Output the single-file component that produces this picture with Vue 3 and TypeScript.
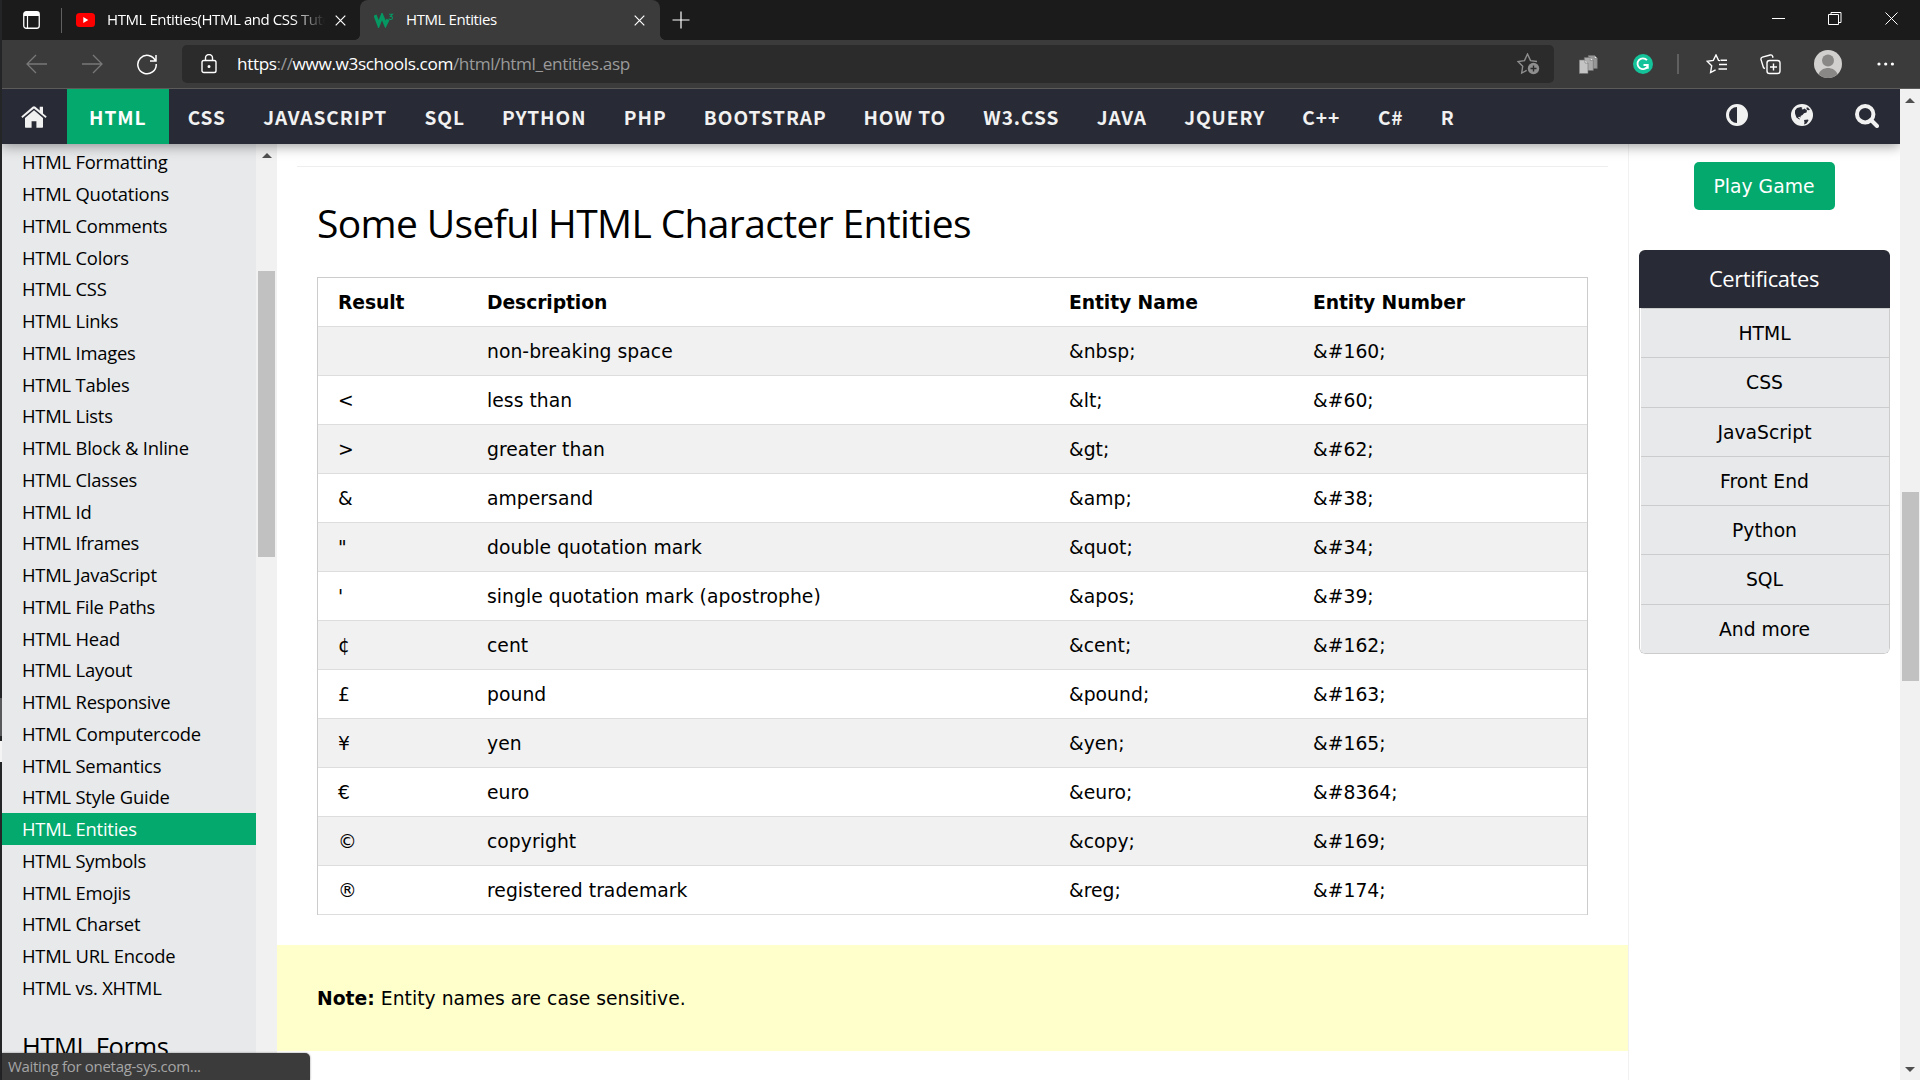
<script setup lang="ts">
interface NavItem { label: string; width: number }
interface Entity { result: string; description: string; name: string; number: string }

const navItems: NavItem[] = [
  { label: 'HTML', width: 102 },
  { label: 'CSS', width: 76 },
  { label: 'JAVASCRIPT', width: 161 },
  { label: 'SQL', width: 78 },
  { label: 'PYTHON', width: 121 },
  { label: 'PHP', width: 81 },
  { label: 'BOOTSTRAP', width: 159 },
  { label: 'HOW TO', width: 120 },
  { label: 'W3.CSS', width: 113 },
  { label: 'JAVA', width: 88 },
  { label: 'JQUERY', width: 118 },
  { label: 'C++', width: 75 },
  { label: 'C#', width: 64 },
  { label: 'R', width: 50 },
]

const lessons: string[] = [
  'Formatting', 'Quotations', 'Comments', 'Colors', 'CSS', 'Links', 'Images', 'Tables', 'Lists',
  'Block & Inline', 'Classes', 'Id', 'Iframes', 'JavaScript', 'File Paths', 'Head', 'Layout',
  'Responsive', 'Computercode', 'Semantics', 'Style Guide', 'Entities', 'Symbols', 'Emojis',
  'Charset', 'URL Encode', 'vs. XHTML',
]
const activeLesson = 'Entities'

const entities: Entity[] = [
  { result: '\u00a0', description: 'non-breaking space', name: '&nbsp;', number: '&#160;' },
  { result: '<', description: 'less than', name: '&lt;', number: '&#60;' },
  { result: '>', description: 'greater than', name: '&gt;', number: '&#62;' },
  { result: '&', description: 'ampersand', name: '&amp;', number: '&#38;' },
  { result: '"', description: 'double quotation mark', name: '&quot;', number: '&#34;' },
  { result: "'", description: 'single quotation mark (apostrophe)', name: '&apos;', number: '&#39;' },
  { result: '¢', description: 'cent', name: '&cent;', number: '&#162;' },
  { result: '£', description: 'pound', name: '&pound;', number: '&#163;' },
  { result: '¥', description: 'yen', name: '&yen;', number: '&#165;' },
  { result: '€', description: 'euro', name: '&euro;', number: '&#8364;' },
  { result: '©', description: 'copyright', name: '&copy;', number: '&#169;' },
  { result: '®', description: 'registered trademark', name: '&reg;', number: '&#174;' },
]

const certificates: string[] = ['HTML', 'CSS', 'JavaScript', 'Front End', 'Python', 'SQL', 'And more']
</script>

<template>
  <div class="screen">
    <div class="edge"><i class="e1"></i><i class="e2"></i><i class="e3"></i><i class="e4"></i></div>
    <div class="window">
      <header class="tabbar">
        <svg class="tab-actions" width="17" height="18" viewBox="0 0 17 18" fill="none" stroke="#fff">
          <rect x=".75" y=".75" width="15.5" height="16.5" rx="2.5" stroke-width="1.3" />
          <path d="M1 3h15" stroke-width="4" /><path d="M4.500 5v12" stroke-width="1.2" />
        </svg>
        <i class="tab-divider"></i>
        <div class="tab tab-idle">
          <svg width="19" height="14" viewBox="0 0 19 14"><rect width="19" height="14" rx="3.5" fill="#f00" /><path d="M7.3 4v6l5-3z" fill="#fff" /></svg>
          <span class="tab-title fade">HTML Entities(HTML and CSS Tutorial)</span>
          <svg class="close" width="11" height="11" viewBox="0 0 11 11"><path d="M.7.7l9.600 9.600M10.300.7L.7 10.300" stroke="#fff" stroke-width="1.2" /></svg>
        </div>
        <div class="tab tab-active">
          <svg width="20" height="15" viewBox="0 0 20 15" fill="none" stroke="#059862">
            <path d="M1 2l3.600 9.500L8 3l3.500 8.500L14 6.500" stroke-width="3.300" />
            <path d="M15 1.200h3.500l-2 2.200c3 0 2.500 3.200-.2 3.100-.8 0-1.300-.4-1.600-.9" stroke-width="1.100" />
          </svg>
          <span class="tab-title">HTML Entities</span>
          <svg class="close" width="11" height="11" viewBox="0 0 11 11"><path d="M.7.7l9.600 9.600M10.300.7L.7 10.300" stroke="#fff" stroke-width="1.2" /></svg>
        </div>
        <svg class="plus" width="18" height="18" viewBox="0 0 18 18"><path d="M9 .5v17M.5 9h17" stroke="#fff" stroke-width="1.2" /></svg>
        <svg class="win-controls" width="127" height="14" viewBox="0 0 127 14" fill="none" stroke="#fff">
          <path d="M0 6.500h13" /><path d="M56.500 2.500h10v10h-10zM59 2.500v-2h10v10h-2M113.500.5l12 12M125.500.5l-12 12" />
        </svg>
      </header>

      <div class="toolbar">
        <svg class="nav-buttons" width="132" height="22" viewBox="0 0 132 22" fill="none" stroke-width="1.300">
          <path d="M22 11H2M11 2l-9 9 9 9M57 11h20M68 2l9 9-9 9" stroke="#787878" />
          <path d="M130.500 8A9.200 9.200 0 1 0 131.200 11M131 2v6h-6" stroke="#fff" stroke-width="1.500" />
        </svg>
        <div class="address">
          <svg width="16" height="20" viewBox="0 0 16 20" fill="none" stroke="#fff" stroke-width="1.400"><rect x="1" y="6.500" width="14" height="12" rx="1.800" /><path d="M4.500 6.500V4a3.500 3.500 0 0 1 7 0v2.500" /><circle cx="8" cy="12.500" r=".8" fill="#fff" /></svg>
          <span class="url"><b>https</b>://<b>www.w3schools.com</b>/html/html_entities.asp</span>
          <svg class="add-fav" width="23" height="22" viewBox="0 0 23 22" fill="none" stroke="#8e8e8e" stroke-width="1.400">
            <path d="M20 8.500l-6.500-.9L10.500 1l-3 6.600-6.500.9 4.700 4.800L4.700 20l5-2.700" />
            <circle cx="16.500" cy="15.500" r="5.700" fill="#8e8e8e" stroke="none" /><path d="M16.500 12.500v6M13.500 15.500h6" stroke="#2b2b2b" />
          </svg>
        </div>
        <div class="actions">
          <svg width="19" height="19" viewBox="0 0 19 19" stroke="#6e6e6e" stroke-width=".6">
            <path d="M9.300.5h6l3 3v10h-9z" fill="#989898" /><path d="M5.300 2.500h6l3 3v10h-9z" fill="#ababab" /><path d="M.3 5H6l3 3v10.500H.3z" fill="#c4c4c4" /><path d="M6 5v3h3M11.300 2.500v3h3M15.300.5v3h3" fill="#eee" />
          </svg>
          <svg width="20" height="20" viewBox="0 0 20 20" fill="none"><circle cx="10" cy="10" r="10" fill="#15c39a" /><path d="M14 6.200A5.400 5.400 0 1 0 14.800 12M10.500 11h4.300v3.800" stroke="#fff" stroke-width="1.800" /></svg>
          <i class="bar"></i>
          <svg width="22" height="20" viewBox="0 0 22 20" fill="none" stroke="#fff" stroke-width="1.400"><path d="M14 6.600l-1.500-.2L10 1 7.300 6.400 1.200 7.300l4.500 4.400L4.600 18.500l5-2.700" /><path d="M14.500 6.200H21M13 10.500h8M12.500 15H21" /></svg>
          <svg width="21" height="21" viewBox="0 0 21 21" fill="none" stroke="#fff" stroke-width="1.400"><path d="M5 14.500l-1.500-.7L1 5.600c-.3-1.300.2-2 1.400-2.400L10.200 1c1.200-.3 2 .1 2.400 1.300l.4 1.500" /><rect x="7" y="6.500" width="13" height="13" rx="2.600" /><path d="M13.500 9.500v7M10 13h7" /></svg>
          <svg width="28" height="28" viewBox="0 0 28 28"><circle cx="14" cy="14" r="14" fill="#d2d0ce" /><circle cx="14" cy="10.500" r="6" fill="#8a8886" /><path d="M4.500 24.300C6 20 10 18 14 18s8 2 9.500 6.300A14 14 0 0 1 4.500 24.300z" fill="#8a8886" /></svg>
          <svg width="18" height="4" viewBox="0 0 18 4" fill="#fff"><circle cx="2" cy="2" r="1.600" /><circle cx="8.700" cy="2" r="1.600" /><circle cx="15.400" cy="2" r="1.600" /></svg>
        </div>
      </div>

      <div class="viewport">
        <div class="page">
          <nav class="topnav">
            <span class="home">
              <svg width="26" height="22" viewBox="0 0 26 22" fill="#f1f1f1"><path d="M13 4.300L4 12v8.700c0 .6.400 1 1 1h5.600v-6.500h4.800v6.500H21c.6 0 1-.4 1-1V12z" /><path d="M25.700 10.600L22 7.400V.8h-3.300v3.600L14.400.700c-.8-.7-2-.7-2.800 0L.3 10.600l1.100 1.300L13 2.500l11.600 9.400z" /></svg>
            </span>
            <span v-for="item in navItems" :key="item.label" class="nav-item" :class="{ on: item.label === 'HTML' }" :style="{ width: item.width + 'px' }">{{ item.label }}</span>
            <span class="tools">
              <svg width="22" height="22" viewBox="0 0 22 22"><circle cx="11" cy="11" r="9.500" fill="none" stroke="#f1f1f1" stroke-width="3" /><path d="M11 1a10 10 0 0 1 0 20z" fill="#f1f1f1" /></svg>
              <svg width="22" height="22" viewBox="0 0 22 22"><circle cx="11" cy="11" r="11" fill="#f1f1f1" /><path d="M4 6.500L6 4l4-1 1.500 1L10.500 5l1.500.6 1.500-1 2.500 2-.5 1.800-2.500.8L11.500 11l-2 1 .3 1.500-1.800-.8-1 .6 2 1.700-.6.6-3-2.200L4 9.500zM13 16l4-.5.5 1-2 3-2.500 1 .5-2zM15.500 3.500l1.500 0 2 2.500-2 .2-1.500-1z" fill="#282a35" /></svg>
              <svg width="24" height="24" viewBox="0 0 24 24" fill="none" stroke="#f1f1f1"><circle cx="10.200" cy="10.200" r="8.200" stroke-width="4" /><path d="M16 16l6 6" stroke-width="4" stroke-linecap="round" /></svg>
            </span>
          </nav>
          <div class="columns">
            <aside class="sidebar">
              <div class="lessons">
                <div v-for="l in lessons" :key="l" class="lesson" :class="{ current: l === activeLesson }">HTML {{ l }}</div>
                <h2>HTML Forms</h2>
              </div>
              <div class="side-scroll"><i class="arrow up"></i><i class="thumb"></i></div>
            </aside>
            <main class="content">
              <hr>
              <h1>Some Useful HTML Character Entities</h1>
              <div class="table">
                <div class="row head"><span>Result</span><span>Description</span><span>Entity Name</span><span>Entity Number</span></div>
                <div v-for="e in entities" :key="e.name" class="row"><span>{{ e.result }}</span><span>{{ e.description }}</span><span>{{ e.name }}</span><span>{{ e.number }}</span></div>
              </div>
              <p class="note"><b>Note:</b> Entity names are case sensitive.</p>
            </main>
            <aside class="right">
              <button class="play">Play Game</button>
              <section class="certs">
                <h3>Certificates</h3>
                <div class="cert-list"><div v-for="c in certificates" :key="c" class="cert">{{ c }}</div></div>
              </section>
            </aside>
          </div>
        </div>
        <div class="page-scroll"><i class="arrow up"></i><i class="thumb"></i><i class="arrow down"></i></div>
      </div>
    </div>
    <div class="status">Waiting for onetag-sys.com...</div>
  </div>
</template>

<style>
body { margin: 0; overflow: hidden; }
</style>

<style scoped>
* { box-sizing: border-box; }
.screen { position: relative; display: flex; width: 1920px; height: 1080px; overflow: hidden; background: #fff; font-family: "Open Sans", "Noto Sans", sans-serif; color: #000; }
svg { display: block; flex: none; }
.edge { display: flex; flex-direction: column; width: 2px; background: #242527; }
.edge .e1 { height: 698px; }
.edge .e2 { height: 38px; background: #58595b; }
.edge .e3 { height: 5px; }
.edge .e4 { height: 21px; background: #f4f4f4; }
.window { display: flex; flex-direction: column; width: 1918px; }

.tabbar { display: flex; align-items: center; height: 40px; background: #1b1b1b; }
.tab-actions { margin-left: 21px; }
.tab-divider { width: 1px; height: 25px; margin: 0 0 0 21px; background: #606060; }
.tab { position: relative; display: flex; align-items: center; height: 40px; color: #fff; font-size: 15px; }
.tab-idle { width: 298px; padding: 0 14px 0 14px; }
.tab-active { width: 300px; padding: 0 15px 0 14px; background: #3b3b3b; border-radius: 8px 8px 0 0; }
.tab-active::before, .tab-active::after { content: ""; position: absolute; bottom: 0; width: 5px; height: 5px; }
.tab-active::before { left: -5px; background: radial-gradient(circle at 0 0, transparent 4.5px, #3b3b3b 5px); }
.tab-active::after { right: -5px; background: radial-gradient(circle at 100% 0, transparent 4.5px, #3b3b3b 5px); }
.tab-title { flex: 1; margin: 0 0 2px 12px; white-space: nowrap; overflow: hidden; letter-spacing: -0.4px; line-height: 24px; }
.tab-title.fade { margin-right: 10px; letter-spacing: -0.42px; -webkit-mask-image: linear-gradient(to right, #000 85%, transparent); mask-image: linear-gradient(to right, #000 85%, transparent); }
.plus { margin-left: 12px; }
.win-controls { margin: 0 21px 3px auto; }

.toolbar { display: flex; align-items: center; height: 49px; background: #3b3b3b; border-bottom: 1px solid #5c5b59; }
.nav-buttons { margin-left: 23px; }
.address { display: flex; align-items: center; width: 1372px; height: 38px; margin-left: 25px; padding: 0 14px 0 19px; border-radius: 5px; background: #2b2b2b; }
.url { flex: 1; margin: 0 0 2px 20px; color: #9a9a9a; font-size: 17.2px; letter-spacing: -0.38px; }
.url b { font-weight: 400; color: #fff; }
.actions { display: flex; align-items: center; margin-left: 25px; }
.actions > :nth-child(2) { margin-left: 35px; }
.bar { width: 2px; height: 20px; margin-left: 24px; background: #606060; }
.actions > :nth-child(4) { margin-left: 27px; }
.actions > :nth-child(5) { margin-left: 32px; }
.actions > :nth-child(6) { margin-left: 33px; }
.actions > :nth-child(7) { margin-left: 35px; }

.viewport { display: flex; height: 991px; }
.page { width: 1898px; height: 991px; overflow: hidden; }
.topnav { position: relative; z-index: 1; display: flex; height: 55px; background: #282a35; color: #f1f1f1; box-shadow: 0 2px 12px rgba(0, 0, 0, .4); font: 700 19.1px/57px "Noto Sans CJK SC", "Noto Sans", sans-serif; letter-spacing: 0.95px; }
.home { display: flex; width: 65px; padding: 17px 0 0 19px; }
.nav-item { text-align: center; white-space: nowrap; text-indent: -0.5px; }
.nav-item.on { background: #04aa6d; color: #fff; }
.tools { display: flex; margin: 15px 21px 0 auto; }
.tools svg + svg { margin-left: 43px; }
.tools svg:last-child { margin-left: 42px; }

.columns { display: flex; height: 936px; }
.sidebar { display: flex; width: 275px; background: #e7e9eb; }
.lessons { width: 254px; padding-top: 2.25px; overflow: hidden; }
.lesson { height: 31.75px; padding-left: 20px; font-size: 18.4px; line-height: 31px; letter-spacing: -0.22px; white-space: nowrap; }
.lesson.current { background: #04aa6d; color: #fff; }
.lessons h2 { margin: 24px 0 0 20px; font-weight: 400; font-size: 25.5px; line-height: 36px; letter-spacing: -0.4px; }
.side-scroll { display: flex; flex-direction: column; align-items: center; width: 21px; padding-top: 9px; background: #f1f1f1; }
.arrow { width: 0; height: 0; border: 5px solid transparent; }
.arrow.up { border-top: 0; border-bottom-color: #505050; }
.arrow.down { border-bottom: 0; border-top-color: #505050; }
.thumb { width: 17px; background: #c1c1c1; }
.side-scroll .thumb { height: 286px; margin-top: 113px; }

.content { width: 1351px; padding-top: 22px; }
hr { height: 1px; margin: 0 20px; border: 0; background: #eee; }
h1 { margin: 27px 0 0 40px; font-size: 39px; line-height: 58px; font-weight: 400; letter-spacing: -0.65px; white-space: nowrap; }
.table { width: 1271px; margin: 25px 0 0 40px; border: 1px solid #ccc; border-bottom: 0; font: 18.75px/48px "DejaVu Sans", Verdana, sans-serif; letter-spacing: 0.04px; }
.row { display: grid; grid-template-columns: 149px 582px 244px 1fr; height: 49px; padding: 1px 0 0 20px; border-bottom: 1px solid #ddd; }
.row:nth-child(even) { background: #f1f1f1; }
.row span { height: 47px; white-space: pre; }
.row.head { font-weight: 700; letter-spacing: -0.1px; }
.note { height: 106px; margin: 30px 0 0; padding-left: 40px; background: #ffffcc; font: 18.75px/107px "DejaVu Sans", Verdana, sans-serif; letter-spacing: 0.02px; }

.right { display: flex; flex-direction: column; align-items: center; width: 272px; padding: 18px 1px 0 0; border-left: 1px solid #f1f1f1; font-family: "DejaVu Sans", Verdana, sans-serif; }
.play { width: 141px; height: 48px; padding: 0; border: 0; border-radius: 5px; background: #04aa6d; color: #fff; font: 18.75px/49px "DejaVu Sans", Verdana, sans-serif; }
.certs { width: 251px; margin-top: 40px; border-radius: 6px; overflow: hidden; }
h3 { height: 58px; margin: 0; background: #282a35; color: #fff; text-align: center; font: 400 21.9px/58px "Open Sans", "Noto Sans", sans-serif; letter-spacing: -0.35px; }
.cert-list { border: 1px solid #ccc; border-top: 0; border-radius: 0 0 6px 6px; padding-left: 1px; background: #fff; overflow: hidden; }
.cert { height: 49.3px; border-top: 1px solid #ccc; background: #e7e9eb; text-align: center; font-size: 18.75px; line-height: 49px; }

.page-scroll { display: flex; flex-direction: column; align-items: center; width: 20px; padding: 9px 0 8px; background: #f1f1f1; }
.page-scroll .thumb { height: 189px; margin: 389px 0 auto; }

.status { position: absolute; left: 2px; bottom: 0; width: 308px; height: 27px; padding-left: 6px; border-radius: 0 5px 0 0; background: #3b3b3b; color: #a5a5a5; box-shadow: 0 0 2px rgba(0, 0, 0, .5); font-size: 15px; line-height: 27px; letter-spacing: -0.3px; white-space: nowrap; }
</style>
